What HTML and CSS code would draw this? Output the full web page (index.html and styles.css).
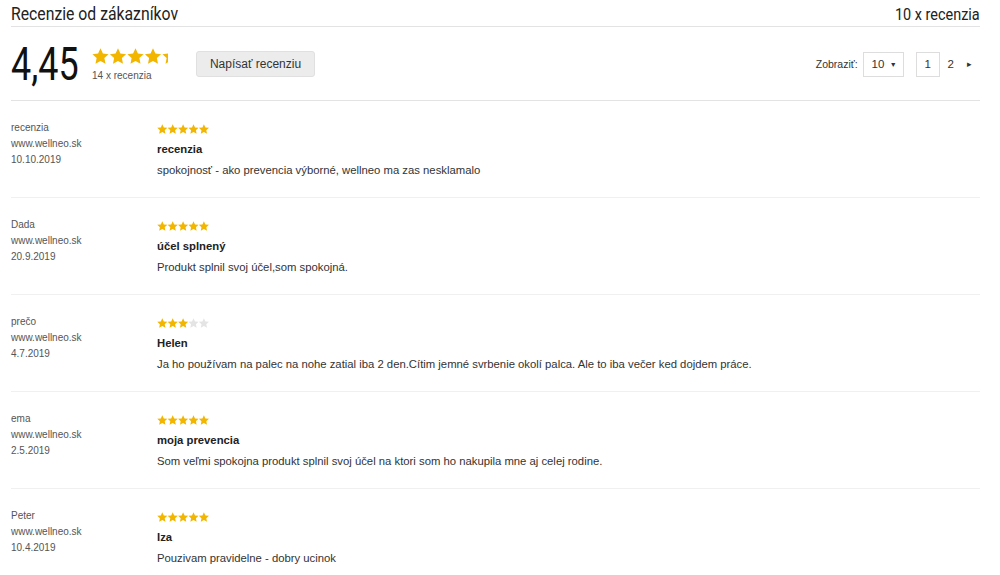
FILE: index.html
```html
<!DOCTYPE html>
<html lang="sk">
<head>
    <meta charset="UTF-8">
    <title>Recenzie od zákazníkov</title>
    <link rel="stylesheet" href="styles.css">
</head>
<body>

<svg width="0" height="0" class="defs">
    <symbol id="star" viewBox="0 0 10 10">
        <polygon points="5,0.2 6.41,3.26 9.76,3.65 7.28,5.94 7.94,9.25 5,7.6 2.06,9.25 2.72,5.94 0.24,3.65 3.59,3.26"/>
    </symbol>
</svg>

<div class="reviews">
    <!-- header -->
    <div class="reviews-head">
        <h2>Recenzie od zákazníkov</h2>
        <span class="count">10 x recenzia</span>
    </div>

    <!-- summary -->
    <div class="summary">
        <div class="score">4,45</div>
        <div class="score-stars">
            <div class="big-stars" style="width:76px">
                <svg width="90" height="17"><use href="#star" x="0" width="17" height="17"/><use href="#star" x="17.5" width="17" height="17"/><use href="#star" x="35" width="17" height="17"/><use href="#star" x="52.5" width="17" height="17"/><use href="#star" x="70" width="17" height="17"/></svg>
            </div>
            <div class="score-count">14 x recenzia</div>
        </div>
        <button class="btn">Napísať recenziu</button>

        <div class="pager">
            <label>Zobraziť:</label>
            <div class="select">10 <span class="caret">&#9660;</span></div>
            <span class="page active">1</span>
            <span class="page">2</span>
            <span class="next">&#9656;</span>
        </div>
    </div>

    <div id="list"></div>
</div>

<script>
const reviews = [
    { name: 'recenzia', date: '10.10.2019', stars: 5, title: 'recenzia', text: 'spokojnosť - ako prevencia výborné, wellneo ma zas nesklamalo' },
    { name: 'Dada', date: '20.9.2019', stars: 5, title: 'účel splnený', text: 'Produkt splnil svoj účel,som spokojná.' },
    { name: 'prečo', date: '4.7.2019', stars: 3, title: 'Helen', text: 'Ja ho používam na palec na nohe zatial iba 2 den.Cítim jemné svrbenie okolí palca. Ale to iba večer ked dojdem práce.' },
    { name: 'ema', date: '2.5.2019', stars: 5, title: 'moja prevencia', text: 'Som veľmi spokojna produkt splnil svoj účel na ktori som ho nakupila mne aj celej rodine.' },
    { name: 'Peter', date: '10.4.2019', stars: 5, title: 'Iza', text: 'Pouzivam pravidelne - dobry ucinok' }
];

const list = document.getElementById('list');
reviews.forEach(r => {
    let stars = '';
    for (let i = 0; i < 5; i++) {
        stars += `<use href="#star" x="${i * 10.4}" width="10.6" height="10.6" class="${i < r.stars ? 'on' : 'off'}"/>`;
    }
    const row = document.createElement('div');
    row.className = 'review';
    row.innerHTML = `
        <div class="author">
            <div>${r.name}</div>
            <div>www.wellneo.sk</div>
            <div>${r.date}</div>
        </div>
        <div class="body">
            <svg class="small-stars" width="53" height="11">${stars}</svg>
            <div class="title">${r.title}</div>
            <div class="text">${r.text}</div>
        </div>
    `;
    list.appendChild(row);
});
</script>

</body>
</html>
```

FILE: styles.css
```css
body {
    margin: 0;
    background: #fff;
    color: #333;
    font-family: 'Liberation Sans', Arial, sans-serif;
}
.defs {
    position: absolute;
}
.reviews {
    width: 969px;
    margin-left: 11px;
}
.reviews-head {
    display: flex;
    justify-content: space-between;
    align-items: flex-end;
    height: 26px;
    border-bottom: 1px solid #e3e3e3;
    font-family: Roboto, sans-serif;
    color: #222;
}
.reviews-head h2 {
    margin: 0;
    font-size: 19px;
    font-weight: normal;
    line-height: 24px;
    transform: scaleX(0.83);
    transform-origin: left center;
    white-space: nowrap;
}
.reviews-head .count {
    font-size: 17px;
    line-height: 24px;
    transform: scaleX(0.85);
    transform-origin: right center;
    white-space: nowrap;
}
.summary {
    display: flex;
    align-items: center;
    height: 73px;
    border-bottom: 1px solid #e3e3e3;
}
.score {
    font-family: Roboto, sans-serif;
    font-size: 46px;
    color: #111;
    width: 80px;
    transform: scaleX(0.78);
    transform-origin: left center;
    margin-top: 1px;
}
.score-stars {
    margin-left: 1px;
    margin-top: 2px;
    width: 80px;
}
.big-stars {
    overflow: hidden;
    height: 17px;
    fill: #f2b600;
}
.big-stars svg {
    display: block;
}
.score-count {
    font-size: 10px;
    color: #555;
    margin-top: 5px;
}
.btn {
    margin-left: 24px;
    width: 119px;
    height: 26px;
    background: #ececec;
    border: 1px solid #e0e0e0;
    border-radius: 3px;
    font-family: 'Liberation Sans', Arial, sans-serif;
    font-size: 12px;
    color: #333;
    margin-top: 1px;
}
.pager {
    margin-left: auto;
    display: flex;
    align-items: center;
    font-size: 10.5px;
    color: #333;
    margin-top: 1px;
}
.pager label {
    margin-right: 5px;
}
.select {
    box-sizing: border-box;
    width: 41px;
    height: 25px;
    border: 1px solid #ddd;
    display: flex;
    align-items: center;
    justify-content: space-between;
    padding: 0 6px 0 8px;
    font-size: 11.5px;
}
.caret {
    font-size: 7px;
}
.page {
    box-sizing: border-box;
    height: 25px;
    display: flex;
    align-items: center;
    justify-content: center;
    font-size: 11.5px;
    padding: 0 9px 0 8px;
}
.page.active {
    border: 1px solid #ddd;
    width: 24px;
    padding: 0;
    margin-left: 12px;
}
.next {
    font-size: 9px;
    margin-left: 4px;
    margin-right: 8px;
}
.review {
    display: flex;
    height: 77px;
    padding-top: 19px;
    border-bottom: 1px solid #f0f0f0;
}
.author {
    width: 146px;
    font-size: 10px;
    line-height: 16px;
    color: #555;
}
.body {
    padding-top: 4px;
}
.small-stars {
    display: block;
}
.small-stars .on {
    fill: #f2b600;
}
.small-stars .off {
    fill: #e4e4e4;
}
.title {
    margin-top: 4px;
    font-size: 11.3px;
    line-height: 20px;
    font-weight: bold;
    color: #222;
}
.text {
    margin-top: 1px;
    font-size: 11.3px;
    line-height: 20px;
    color: #333;
}
```
